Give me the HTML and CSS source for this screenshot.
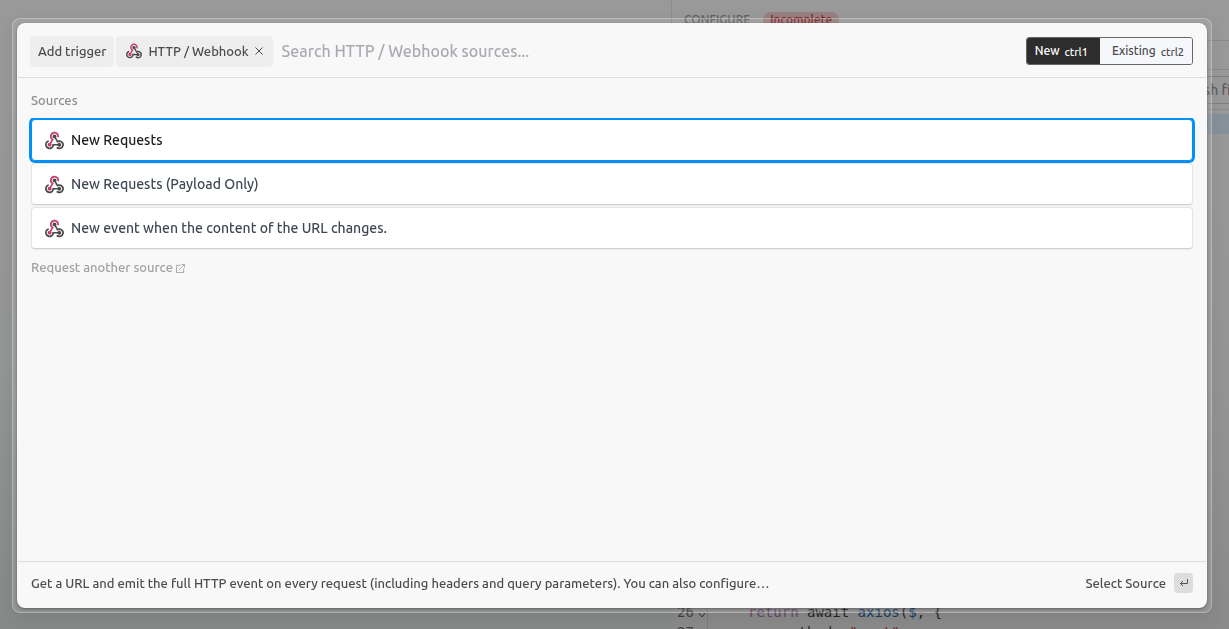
FILE: index.html
```html
<!DOCTYPE html>
<html lang="en">
<head>
<meta charset="utf-8">
<title>Add trigger</title>
<link rel="stylesheet" href="styles.css">
</head>
<body>
<svg class="defs" aria-hidden="true">
  <symbol id="webhook" viewBox="0 0 256 239">
    <path fill="#c73a63" d="M119.5 100.5C108.9 118.3 98.8 135.6 88.4 152.8C85.7 157.2 84.4 160.7 86.5 166.3C92.4 181.8 84.1 196.8 68.5 200.9C53.8 204.8 39.5 195.1 36.6 179.4C34 165.4 44.8 151.8 60.2 149.6C61.5 149.4 62.8 149.4 64.9 149.2L88.3 110.1C73.6 95.5 64.9 78.4 66.8 57.2C68.2 42.3 74.1 29.3 84.8 18.8C105.4-1.5 136.8-4.8 161 10.8C184.3 25.7 195 54.8 185.9 79.8L164.6 74C167.4 60.1 165.3 47.7 156 37C149.8 30 141.9 26.3 132.8 24.9C114.8 22.2 97 33.8 91.8 51.5C85.8 71.7 94.8 88.1 119.5 100.5Z"/>
    <path fill="#4b4b4b" d="M149.8 79.4L172.4 119.2C210.4 107.5 239.1 128.5 249.4 151.1C261.8 178.3 253.3 210.5 228.9 227.3C203.9 244.6 172.2 241.6 150 219.5L167.4 204.9C189.4 219.1 208.5 218.4 222.8 201.6C234.9 187.3 234.6 165.9 222.1 151.9C207.7 135.7 188.4 135.2 165.1 150.7C155.4 133.6 145.6 116.5 136.2 99.2C133.1 93.4 129.6 90 122.4 88.8C110.5 86.7 102.9 76.5 102.4 65.1C102 53.8 108.6 43.5 119 39.5C129.4 35.6 141.5 38.8 148.4 47.6C154.1 54.7 155.9 62.8 152.9 71.6C152.1 74.1 151 76.5 149.8 79.4Z"/>
    <path fill="#4a4a4a" d="M167.7 187.2H121.9C117.5 205.3 108.1 219.8 91.7 229.1C79.1 236.3 65.4 238.7 50.8 236.4C24 232.1 2.1 207.9.2 180.8C-2 150 19.1 122.6 47.3 116.5L53.2 137.7C27.3 150.9 18.4 167.6 25.6 188.4C32 206.7 50.1 216.7 69.8 212.8C89.8 208.9 100 192.2 98.7 165.4C117.8 165.4 136.8 165.2 155.8 165.5C163.3 165.6 169 164.8 174.6 158.3C183.8 147.5 200.8 148.5 210.7 158.6C220.9 169 220.4 185.8 209.7 195.8C199.3 205.4 182.8 204.9 173.2 194.4C171.2 192.3 169.6 189.7 167.7 187.2Z"/>
  </symbol>
</svg>

<div class="app" aria-hidden="true">
  <div class="canvas"></div>
  <div class="panel">
    <div class="panel-head"><span>CONFIGURE</span><span class="status">Incomplete</span></div>
    <div class="tabs"></div>
    <div class="refresh"><span>Refresh fields</span></div>
    <div class="hint"></div>
    <div class="editor">
      <div class="line"><span class="gutter">26<svg viewBox="0 0 8 6"><path d="M1 1l3 4 3-4"/></svg></span><code class="code"><span class="kw">return</span> await <span class="fn">axios</span>(<span class="fn">$</span>, {</code></div>
      <div class="line"><span class="gutter">27</span><code class="code">    method: <span class="str">"post"</span>,</code></div>
    </div>
  </div>
</div>

<div class="overlay">
  <div class="ring">
    <main class="dialog" role="dialog" aria-label="Add trigger">
      <header class="header">
        <button class="chip">Add trigger</button>
        <button class="chip chip-app">
          <svg class="chip-icon"><use href="#webhook"/></svg>
          <span>HTTP / Webhook</span>
          <svg class="close" viewBox="0 0 8 8"><path d="M.5.5l7 7M7.5.5l-7 7"/></svg>
        </button>
        <input class="search" type="text" aria-label="Search sources" placeholder="Search HTTP / Webhook sources...">
        <div class="toggle">
          <button class="option active">New <kbd>ctrl1</kbd></button>
          <button class="option">Existing <kbd>ctrl2</kbd></button>
        </div>
      </header>
      <section class="body">
        <h2 class="title">Sources</h2>
        <div class="list">
          <button class="source selected"><svg class="source-icon"><use href="#webhook"/></svg>New Requests</button>
          <button class="source"><svg class="source-icon"><use href="#webhook"/></svg>New Requests (Payload Only)</button>
          <button class="source"><svg class="source-icon"><use href="#webhook"/></svg>New event when the content of the URL changes.</button>
        </div>
        <a class="request" href="#">Request another source<svg viewBox="0 0 10 10"><path d="M5 1.500H.5v8h8V5M6 .5h3.500V4M9.500.5l-6 6"/></svg></a>
      </section>
      <footer class="footer">
        <p class="summary">Get a URL and emit the full HTTP event on every request (including headers and query parameters). You can also configure…</p>
        <button class="select">Select Source <span class="enter"><svg viewBox="0 0 10 8"><path d="M8.500 0v4.500H1.500M4 2L1.500 4.500 4 7"/></svg></span></button>
      </footer>
    </main>
  </div>
</div>
</body>
</html>
```
FILE: styles.css
```css
* { box-sizing: border-box; }

body {
  margin: 0;
  height: 100vh;
  overflow: hidden;
  font-family: Ubuntu, "Noto Sans", "Open Sans", sans-serif;
  font-size: 13px;
  font-weight: 500;
  line-height: 20px;
  color: #4b4b4b;
}

button, input, kbd { font: inherit; color: inherit; }
button { margin: 0; padding: 0; border: 0; background: none; cursor: pointer; }
h2, p { margin: 0; font: inherit; }
.defs { position: absolute; width: 0; height: 0; }

/* Editor behind the dialog */
.app {
  display: grid;
  grid-template-columns: 671fr 558fr;
  height: 100vh;
  background: #999;
}
.canvas { background: linear-gradient(#999 10%, #949595 60%, #858988); }
.panel {
  display: flex;
  flex-direction: column;
  overflow: hidden;
  border-left: 1px solid #8b8b8b;
  background: linear-gradient(#999 10%, #949494 60%, #8a8a8a);
}
.panel-head {
  display: flex;
  align-items: center;
  gap: 13px;
  height: 40px;
  padding-left: 12px;
  font-size: 12px;
  color: #5f5f5f;
}
.status {
  padding: 0 7px;
  border-radius: 8px;
  background: #967f7f;
  color: #7d2026;
  line-height: 16px;
}
.tabs { height: 30px; border: solid #8a8a8a; border-width: 1px 0; }
.refresh {
  display: flex;
  align-items: center;
  justify-content: flex-end;
  height: 28px;
  margin-top: 6px;
  border: solid #808080;
  border-width: 1px 0;
  font-size: 14px;
  color: #5c5e61;
  white-space: nowrap;
}
.refresh span { margin-right: -28px; }
.hint {
  height: 25px;
  margin-top: 5px;
  border-top: 1px solid #8a8a8a;
  background: linear-gradient(transparent 4px, #87919a 4px);
}
.editor {
  margin: auto 0 -13px;
  font: 14px/20px "DejaVu Sans Mono", monospace;
}
.line { display: flex; height: 20px; color: #242424; }
.gutter {
  display: flex;
  align-items: center;
  gap: 4px;
  width: 36px;
  padding-left: 5px;
  border-right: 1px solid #7c7c7c;
  color: #444;
}
.gutter svg { width: 8px; height: 6px; margin-top: 6px; fill: none; stroke: #333; }
.code { padding-left: 40px; font: inherit; white-space: pre; }
.kw { color: #694469; }
.fn { color: #153c63; }
.str { color: #751f1f; }

/* Dialog */
.overlay {
  position: fixed;
  inset: 0;
  display: flex;
  padding: 18px 17px 16px 12px;
}
.ring {
  display: flex;
  flex: 1;
  min-width: 0;
  padding: 4px;
  border: 1px solid rgba(255, 255, 255, .28);
  border-radius: 8px;
  background: rgba(255, 255, 255, .08);
  box-shadow: 0 6px 16px rgba(0, 0, 0, .08);
}
.dialog {
  display: flex;
  flex: 1;
  flex-direction: column;
  min-width: 0;
  border-radius: 8px;
  background: #f8f8f8;
  box-shadow: 0 1px 3px rgba(0, 0, 0, .35);
}
.header {
  display: flex;
  align-items: center;
  gap: 2px;
  height: 55px;
  margin: 0 1px;
  padding: 1px 13px 0 12px;
  border-bottom: 1px solid #ddd;
}
.chip {
  display: flex;
  align-items: center;
  height: 30px;
  padding: 0 8px;
  border-radius: 4px;
  background: #eee;
  box-shadow: 0 1px 1px rgba(0, 0, 0, .04);
  white-space: nowrap;
}
.chip-app { padding: 0 10px; }
.chip-icon { width: 16px; height: 16px; margin-right: 6px; }
.close { width: 8px; height: 8px; margin-left: 6px; stroke: #4b4b4b; }
.search {
  flex: 1;
  min-width: 0;
  padding: 0 7px;
  border: 0;
  outline: 0;
  background: none;
  font-size: 16px;
}
.search::placeholder { color: #a9aab1; opacity: 1; }
.toggle {
  display: flex;
  height: 28px;
  border: 1px solid #666;
  border-radius: 3px;
  overflow: hidden;
  font-size: 12px;
}
.option {
  display: flex;
  align-items: center;
  gap: 5px;
  padding: 0 8px 0 12px;
  background: #f6f7fb;
}
.option.active { padding: 0 12px 0 8px; background: #2d2d2d; color: #fff; }
.option kbd { padding-top: 2px; font-size: 11px; }

.body { flex: 1; padding: 12px 12px 0; }
.title { padding-left: 2px; color: #8b8b8b; }
.list {
  display: flex;
  flex-direction: column;
  gap: 2px;
  margin-top: 8px;
  padding: 1px 2px 2px;
  overflow: hidden;
}
.source {
  display: flex;
  align-items: center;
  gap: 7px;
  height: 42px;
  padding: 0 13px;
  border: 1px solid #e4e4e4;
  border-bottom-color: #d2d2d2;
  border-radius: 4px;
  background: #fff;
  box-shadow: 0 1px 1px rgba(0, 0, 0, .06);
  font-size: 14px;
  color: #3f4754;
}
.source.selected {
  position: relative;
  border-color: #0090f8;
  box-shadow: 0 0 0 2px #0090f8;
  color: #1c1c1c;
}
.source-icon { width: 19px; height: 19px; }
.request {
  display: inline-flex;
  align-items: center;
  gap: 3px;
  margin: 6px 2px 0;
  color: #a0a0a0;
  text-decoration: none;
}
.request svg { width: 9px; height: 9px; margin-top: 2px; fill: none; stroke: #a0a0a0; }

.footer {
  display: flex;
  align-items: center;
  justify-content: space-between;
  gap: 16px;
  height: 47px;
  margin: 0 1px;
  padding: 0 13px 4px;
  border-top: 1px solid #ddd;
}
.summary { overflow: hidden; text-overflow: ellipsis; white-space: nowrap; }
.select { display: flex; align-items: center; gap: 8px; white-space: nowrap; }
.enter {
  display: flex;
  align-items: center;
  justify-content: center;
  width: 19px;
  height: 20px;
  border-radius: 4px;
  background: #ddd;
}
.enter svg { width: 10px; height: 8px; fill: none; stroke: #555; }
```
